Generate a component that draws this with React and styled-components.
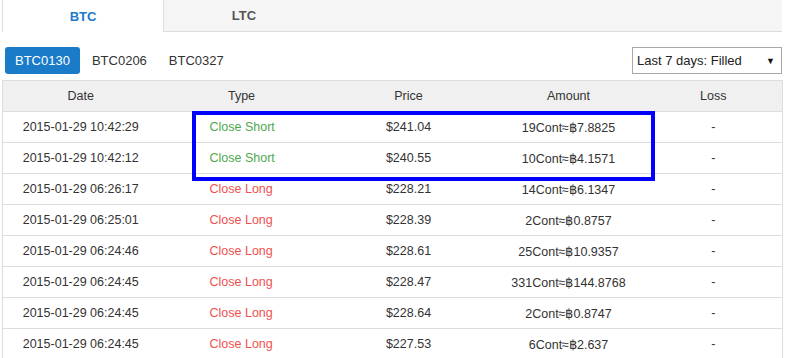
import React from "react";
import styled, { createGlobalStyle } from "styled-components";

const GlobalStyle = createGlobalStyle`
  body {
    margin: 0;
    background: #fff;
    font-family: "Liberation Sans", Arial, sans-serif;
    color: #333;
  }
`;

const Wrapper = styled.div`
  width: 780px;
  margin-left: 2px;
  position: relative;
`;

const TabBar = styled.div`
  display: flex;
  height: 31px;
  background-color: #f5f5f5;
  border-bottom: 1px solid #ddd;
`;

const Tab = styled.div`
  width: 160px;
  display: flex;
  align-items: center;
  justify-content: center;
  font-size: 13px;
  font-weight: 700;
  color: ${(p) => (p.active ? "#1a7bc9" : "#555")};
  background-color: ${(p) => (p.active ? "#fff" : "transparent")};
  border-left: ${(p) => (p.active ? "1px solid #ddd" : "none")};
  border-right: ${(p) => (p.active ? "1px solid #ddd" : "none")};
  margin-bottom: ${(p) => (p.active ? "-1px" : "0")};
`;

const Toolbar = styled.div`
  display: flex;
  justify-content: space-between;
  align-items: center;
  margin-top: 15px;
  margin-bottom: 6px;
`;

const Contracts = styled.div`
  display: flex;
  margin-left: 3px;
`;

const ContractButton = styled.button`
  height: 27px;
  padding: 0 10px;
  margin-right: 2px;
  border: none;
  border-radius: 3px;
  font-family: inherit;
  font-size: 13px;
  cursor: pointer;
  color: ${(p) => (p.active ? "#fff" : "#333")};
  background-color: ${(p) => (p.active ? "#1a7bc9" : "transparent")};
`;

const Select = styled.div`
  width: 150px;
  height: 27px;
  box-sizing: border-box;
  border: 1px solid #a9a9a9;
  display: flex;
  align-items: center;
  justify-content: space-between;
  padding: 0 6px 0 4px;
  font-size: 13px;
  color: #222;
`;

const Arrow = styled.span`
  font-size: 9px;
  color: #111;
`;

const Table = styled.table`
  width: 780px;
  border-collapse: collapse;
  table-layout: fixed;
  font-size: 12.5px;
  border-left: 1px solid #ddd;
  border-right: 1px solid #ddd;
`;

const HeadCell = styled.th`
  height: 30px;
  background-color: #f0f0f0;
  font-weight: 400;
  color: #333;
  text-align: center;
  border-top: 1px solid #ddd;
  border-bottom: 1px solid #ddd;
  padding: 0;
`;

const Cell = styled.td`
  height: 30px;
  padding: 0 0 0 ${(p) => (p.left ? "51px" : "0")};
  text-align: ${(p) => (p.left ? "left" : "center")};
  border-bottom: 1px solid #ddd;
  color: ${(p) => p.color || "#333"};
`;

const Highlight = styled.div`
  position: absolute;
  left: 190px;
  top: 111px;
  width: 463px;
  height: 70px;
  box-sizing: border-box;
  border: 4px solid #0000ff;
  pointer-events: none;
`;

const rows = [
  ["2015-01-29 10:42:29", "Close Short", "$241.04", "19Cont≈฿7.8825"],
  ["2015-01-29 10:42:12", "Close Short", "$240.55", "10Cont≈฿4.1571"],
  ["2015-01-29 06:26:17", "Close Long", "$228.21", "14Cont≈฿6.1347"],
  ["2015-01-29 06:25:01", "Close Long", "$228.39", "2Cont≈฿0.8757"],
  ["2015-01-29 06:24:46", "Close Long", "$228.61", "25Cont≈฿10.9357"],
  ["2015-01-29 06:24:45", "Close Long", "$228.47", "331Cont≈฿144.8768"],
  ["2015-01-29 06:24:45", "Close Long", "$228.64", "2Cont≈฿0.8747"],
  ["2015-01-29 06:24:45", "Close Long", "$227.53", "6Cont≈฿2.637"],
];

export default function App() {
  return (
    <Wrapper>
      <GlobalStyle />
      <TabBar>
        <Tab active>BTC</Tab>
        <Tab>LTC</Tab>
      </TabBar>
      <Toolbar>
        <Contracts>
          <ContractButton active>BTC0130</ContractButton>
          <ContractButton>BTC0206</ContractButton>
          <ContractButton>BTC0327</ContractButton>
        </Contracts>
        <Select>
          <span>Last 7 days: Filled</span>
          <Arrow>▼</Arrow>
        </Select>
      </Toolbar>
      <Table>
        <colgroup>
          <col style={{ width: 156 }} />
          <col style={{ width: 166 }} />
          <col style={{ width: 168 }} />
          <col style={{ width: 152 }} />
          <col style={{ width: 138 }} />
        </colgroup>
        <thead>
          <tr>
            <HeadCell>Date</HeadCell>
            <HeadCell>Type</HeadCell>
            <HeadCell>Price</HeadCell>
            <HeadCell>Amount</HeadCell>
            <HeadCell>Loss</HeadCell>
          </tr>
        </thead>
        <tbody>
          {rows.map(([date, type, price, amount], i) => (
            <tr key={i}>
              <Cell>{date}</Cell>
              <Cell left color={type === "Close Short" ? "#4fa84f" : "#f0504f"}>
                {type}
              </Cell>
              <Cell>{price}</Cell>
              <Cell>{amount}</Cell>
              <Cell>-</Cell>
            </tr>
          ))}
        </tbody>
      </Table>
      <Highlight />
    </Wrapper>
  );
}
